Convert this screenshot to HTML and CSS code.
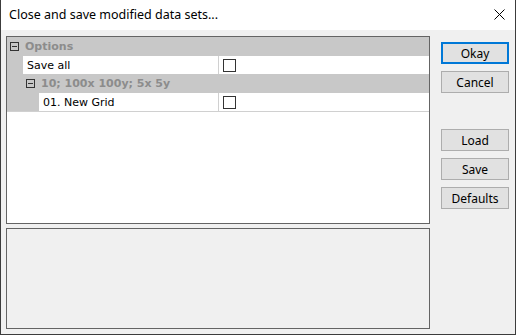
FILE: index.html
```html
<!DOCTYPE html>
<html lang="en">
<head>
    <meta charset="UTF-8">
    <title>Close and save modified data sets...</title>
    <link rel="stylesheet" href="styles.css">
</head>
<body>
    <div class="dialog">
        <div class="titlebar">
            <span class="title">Close and save modified data sets...</span>
            <svg class="close-icon" width="11" height="11" viewBox="0 0 11 11">
                <path d="M0.5 0.5 L10.5 10.5 M10.5 0.5 L0.5 10.5" stroke="#000" stroke-width="1" fill="none"/>
            </svg>
        </div>

        <div class="client">
            <div class="left-column">
                <div class="prop-grid">
                    <div class="row category">
                        <span class="toggle"></span>
                        <span class="cat-name">Options</span>
                    </div>
                    <div class="row prop">
                        <div class="indent"></div>
                        <div class="prop-name">Save all</div>
                        <div class="prop-value"><span class="check"></span></div>
                    </div>
                    <div class="row category level-2">
                        <span class="toggle"></span>
                        <span class="cat-name">10; 100x 100y; 5x 5y</span>
                    </div>
                    <div class="row prop level-2 last">
                        <div class="indent"></div>
                        <div class="prop-name">01. New Grid</div>
                        <div class="prop-value"><span class="check"></span></div>
                    </div>
                </div>
                <div class="help-panel"></div>
            </div>

            <div class="button-column">
                <button class="dlg-btn default">Okay</button>
                <button class="dlg-btn">Cancel</button>
                <button class="dlg-btn spaced">Load</button>
                <button class="dlg-btn">Save</button>
                <button class="dlg-btn">Defaults</button>
            </div>
        </div>
    </div>
</body>
</html>
```

FILE: styles.css
```css
* {
    margin: 0;
    padding: 0;
    box-sizing: border-box;
}

body {
    background: #f0f0f0;
    font-family: 'Noto Sans', 'Open Sans', sans-serif;
    font-size: 12px;
    color: #000;
}

.dialog {
    width: 516px;
    height: 335px;
    border: 1px solid #3c3c3c;
    border-top: none;
    background: #f0f0f0;
    display: flex;
    flex-direction: column;
}

.titlebar {
    height: 30px;
    background: #fff;
    display: flex;
    align-items: center;
    padding-left: 8px;
    padding-right: 10px;
}

.title {
    flex: 1;
    font-size: 12.5px;
    padding-bottom: 1px;
}

.close-icon {
    display: block;
    margin-top: -1px;
}

.client {
    flex: 1;
    display: flex;
    padding: 6px 0 5px 5px;
}

.left-column {
    width: 424px;
    display: flex;
    flex-direction: column;
}

.prop-grid {
    height: 188px;
    border: 1px solid #646464;
    background: #fff;
    font-family: 'DejaVu Sans', sans-serif;
    font-size: 11px;
}

.row {
    display: flex;
    height: 19px;
    align-items: center;
}

.row.prop {
    height: 18px;
}

.row.prop.level-2 {
    height: 19px;
}

.row.last {
    border-bottom: 1px solid #d0d0d0;
    height: 20px;
}

.category {
    background: #c8c8c8;
    padding-left: 3px;
}

.category.level-2 {
    padding-left: 19px;
}

.toggle {
    width: 9px;
    height: 9px;
    border: 1px solid #333;
    position: relative;
    margin-right: 6px;
}

.toggle::after {
    content: '';
    position: absolute;
    left: 1px;
    right: 1px;
    top: 3px;
    height: 1px;
    background: #333;
}

.cat-name {
    font-weight: bold;
    color: #8c8c8c;
}

.prop {
    align-items: stretch;
}

.indent {
    width: 16px;
    background: #c8c8c8;
}

.level-2 .indent {
    width: 32px;
}

.prop-name {
    width: 196px;
    display: flex;
    align-items: center;
    padding-left: 4px;
    border-right: 1px solid #d0d0d0;
}

.level-2 .prop-name {
    width: 180px;
}

.prop-value {
    flex: 1;
    display: flex;
    align-items: center;
    padding-left: 4px;
}

.check {
    width: 13px;
    height: 13px;
    border: 1px solid #333;
    background: #fff;
}

.help-panel {
    height: 101px;
    margin-top: 4px;
    border: 1px solid #646464;
    background: #f0f0f0;
}

.button-column {
    display: flex;
    flex-direction: column;
    gap: 7px;
    padding-top: 6px;
    margin-left: 11px;
}

.dlg-btn {
    width: 68px;
    height: 22px;
    background: #e1e1e1;
    border: 1px solid #adadad;
    font-family: 'Noto Sans', 'Open Sans', sans-serif;
    font-size: 12px;
    color: #000;
}

.dlg-btn.default {
    border: 2px solid #0078d7;
}

.dlg-btn.spaced {
    margin-top: 29px;
}
```
